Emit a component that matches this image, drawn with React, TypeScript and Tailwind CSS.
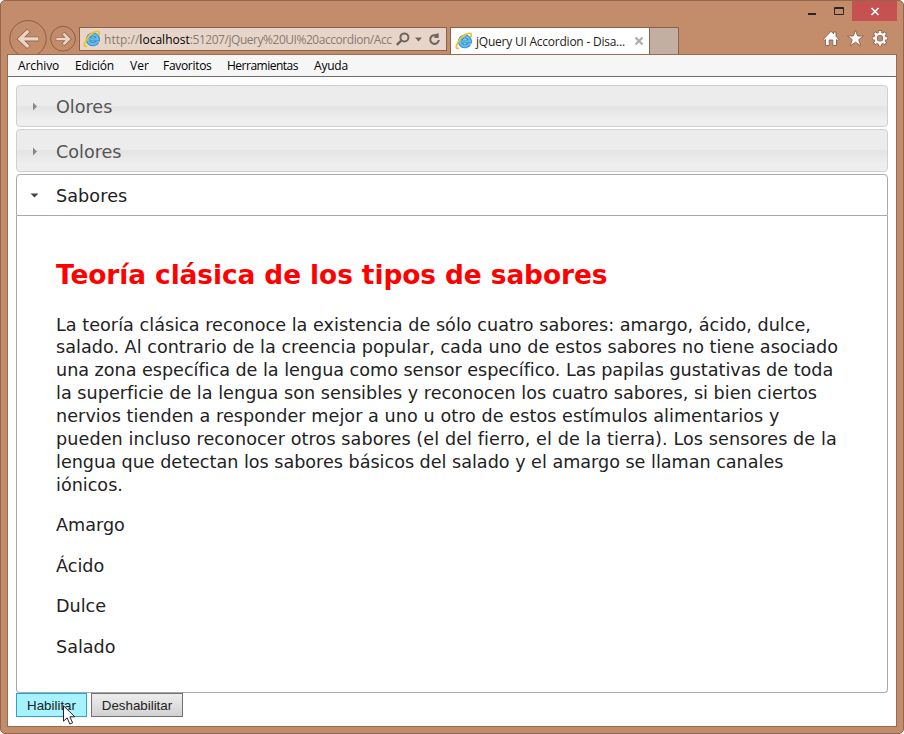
import type { ReactNode } from 'react';

function IeLogo() {
  return (
    <svg width="18" height="18" viewBox="0 0 18 18" className="shrink-0" fill="none">
      <path d="M14.3 11.7A5 4.9 0 1 1 14.9 9.4H6.4" stroke="#2a86c6" strokeWidth="4" />
      <path d="M14.3 11.7A5 4.9 0 1 1 14.9 9.3H6.4" stroke="#62bdec" strokeWidth="2.3" />
      <path d="M3.8 16C1.2 17.3.4 15.4 2.5 11.3C4.8 6.8 9.4 2.3 13.5 1.4C16.2.9 16.8 2.4 15.7 5" stroke="#f3c128" strokeWidth="1.8" />
    </svg>
  );
}

function Chevron({ open = false }: { open?: boolean }) {
  return (
    <svg width="9" height="9" viewBox="0 0 9 9" className="shrink-0">
      {open ? <path d="M.5 2.5h8l-4 4z" fill="#454545" /> : <path d="M3 .5v8l4-4z" fill="#888" />}
    </svg>
  );
}

function ClosedHeader({ children, tall = false }: { children: ReactNode; tall?: boolean }) {
  return (
    <div className={`${tall ? 'h-[43px] pt-px' : 'h-[42px]'} flex items-center gap-[17px] rounded-[4px] border border-[#d0d0d0] bg-[linear-gradient(#ececec_0%,#ececec_49%,#e4e4e4_50%,#efefef_85%,#eeeeee_100%)] pl-[13px] text-[#555]`}>
      <Chevron />
      <span className={`${tall ? 'pt-px' : 'pt-[2px]'} leading-[24px]`}>{children}</span>
    </div>
  );
}

const gearTeeth = [0, 45, 90, 135, 180, 225, 270, 315];

function Toolbar() {
  return (
    <div className="flex h-[54px] pl-[8px]">
      <div className="flex h-[54px] w-[71px] shrink-0 items-end overflow-hidden">
        <svg width="71" height="36" viewBox="8 18 71 36" fill="none">
          <circle cx="28" cy="38.7" r="18.2" stroke="#8e5f45" />
          <circle cx="63" cy="38.7" r="12.4" stroke="#8e5f45" />
          <path d="M28.7 30.5L20 38.9L28.7 47.3M20 38.9H38.8" stroke="#95664b" strokeWidth="5" />
          <path d="M28.3 30.9L20 38.9L28.3 46.9M19.5 38.9H38.3" stroke="#ead5c8" strokeWidth="3.4" />
          <path d="M63 33.2L68.8 39L63 44.8M68.8 39H55.8" stroke="#95664b" strokeWidth="4.2" />
          <path d="M63.4 33.6L68.8 39L63.4 44.4M69.3 39H56.3" stroke="#ead5c8" strokeWidth="2.6" />
        </svg>
      </div>
      <div className="mt-[27px] flex h-[24px] w-[368px] shrink-0 items-center border border-[#8b6149] bg-[#e8d5c9] pl-[3px]">
        <IeLogo />
        <span className="ml-[3px] w-[288px] whitespace-nowrap pt-[1px] font-['Open_Sans',sans-serif] text-[12px] leading-[20px] tracking-[-0.46px] text-[#877b73]">
          <span className="tracking-[0.02px]">http://<span className="text-black">localhost</span></span>:51207/jQuery%20UI%20accordion/Acc
        </span>
        <svg width="48" height="20" viewBox="0 0 48 20" className="ml-[3px]" fill="none" stroke="#70665f">
          <circle cx="9.4" cy="8.4" r="4" strokeWidth="2" />
          <path d="M6.4 11.4L1.8 15.8" strokeWidth="2.4" />
          <path d="M20 8.5h7l-3.5 4z" fill="#70665f" stroke="none" />
          <path d="M42 7A4.3 4.3 0 1 0 43.8 11" strokeWidth="2.1" />
          <path d="M40 4.9L43.7 4.2V9H39.3z" fill="#70665f" stroke="none" />
        </svg>
      </div>
      <div className="ml-[3px] mt-[27px] flex h-[27px] w-[200px] shrink-0 items-center border border-b-0 border-[#8b6149] bg-white pb-px pl-[4px]">
        <IeLogo />
        <span className="ml-[3px] w-[152px] whitespace-nowrap pt-[2px] font-['Open_Sans',sans-serif] text-[12px] leading-[20px] tracking-[-0.23px] text-[#222]">jQuery UI Accordion - Disa...</span>
        <svg width="12" height="12" viewBox="0 0 12 12" className="ml-[5px] shrink-0" fill="none">
          <path d="M2.5 2.5l7 7M9.5 2.5l-7 7" stroke="#aaa" strokeWidth="2" />
        </svg>
      </div>
      <div className="mt-[27px] h-[27px] w-[29px] shrink-0 border border-b-0 border-l-0 border-[#8b6149] bg-[#c2afa2]" />
      <div className="flex flex-1 flex-col items-end">
        <div className="flex h-[21px]">
          <svg width="52" height="21" viewBox="800 0 52 21" fill="none">
            <path d="M808 14h8" stroke="#2b2623" strokeWidth="2" />
            <path d="M834.5 7.5h9v7h-9zM834 8.5h10" stroke="#2b2623" />
          </svg>
          <div className="flex h-[20px] w-[45px] items-center justify-center self-end bg-[#c75050]">
            <svg width="10" height="10" viewBox="0 0 10 10"><path d="M1.5 2l7 7M8.5 2l-7 7" stroke="white" strokeWidth="1.7" /></svg>
          </div>
          <div className="w-[7px]" />
        </div>
        <svg width="81" height="33" viewBox="823 21 81 33" stroke="#896049" strokeWidth=".9">
          <path d="M823.5 39.2L831 31.2L833.5 33.8V32H836V36.2L838.6 39.2L837.4 40.3L836.5 39.5V45.5H832.8V40H829.2V45.5H825.5V39.5L824.5 40.3Z" fill="white" />
          <path d="M855.5 30.3L857.6 36H863.4L858.8 39.6L860.7 45.8L855.5 42.2L850.3 45.8L852.2 39.6L847.6 36H853.4Z" fill="white" />
          <g fill="none" stroke="#896049">
            <circle cx="880" cy="38.3" r="4.4" strokeWidth="3.7" />
            {gearTeeth.map((angle) => (
              <path key={angle} d="M880 33.5V30.3" strokeWidth="3.7" transform={`rotate(${angle} 880 38.3)`} />
            ))}
          </g>
          <g fill="none" stroke="white">
            <circle cx="880" cy="38.3" r="4.4" strokeWidth="2.4" />
            {gearTeeth.map((angle) => (
              <path key={angle} d="M880 34V31" strokeWidth="2.4" transform={`rotate(${angle} 880 38.3)`} />
            ))}
          </g>
        </svg>
      </div>
    </div>
  );
}

function MenuBar() {
  return (
    <nav className="flex h-[22px] shrink-0 items-center border-b border-[#6d6d6d] bg-[#f6f6f6] pl-[10px] pt-px font-['Open_Sans',sans-serif] text-[12px] leading-[20px] text-black">
      <span className="w-[57px] tracking-[-0.1px]">Archivo</span>
      <span className="w-[55px] tracking-[-0.2px]">Edición</span>
      <span className="w-[33px]">Ver</span>
      <span className="w-[64px] tracking-[-0.3px]">Favoritos</span>
      <span className="w-[87px] tracking-[-0.5px]">Herramientas</span>
      <span className="tracking-[-0.2px]">Ayuda</span>
    </nav>
  );
}

export default function App() {
  return (
    <div className="relative h-[734px] w-[904px] overflow-hidden bg-white">
      <div className="h-full rounded-[5px] border border-[#92674d] bg-[#c38c6b]">
        <div className="-ml-px -mt-px w-[904px]">
          <Toolbar />
          <main className="ml-[7px] flex h-[673px] w-[890px] flex-col border border-[#986a50] bg-white">
            <MenuBar />
            <section className="mx-[8px] mt-[8px] flex w-[872px] flex-col font-['DejaVu_Sans',sans-serif] text-[17.6px] text-[#222]">
              <div className="flex flex-col gap-[2px]">
                <ClosedHeader>Olores</ClosedHeader>
                <ClosedHeader tall>Colores</ClosedHeader>
                <div className="flex h-[42px] items-center gap-[17px] rounded-t-[4px] border border-[#aaa] pl-[13px] text-[#212121]">
                  <Chevron open />
                  <span className="pt-[2px] tracking-[0.08px]">Sabores</span>
                </div>
              </div>
              <div className="h-[477px] whitespace-nowrap rounded-b-[4px] border border-t-0 border-[#aaa] pl-[39px] pt-[42px]">
                <h2 className="text-[26.4px] font-bold leading-[34px] tracking-[-0.075px] text-[#ff0000]">Teoría clásica de los tipos de sabores</h2>
                <div className="mt-[21.5px] leading-[22.88px]">
                  <div className="tracking-[0.035px]">La teoría clásica reconoce la existencia de sólo cuatro sabores: amargo, ácido, dulce,</div>
                  <div className="tracking-[0.023px]">salado. Al contrario de la creencia popular, cada uno de estos sabores no tiene asociado</div>
                  <div className="tracking-[-0.02px]">una zona específica de la lengua como sensor específico. Las papilas gustativas de toda</div>
                  <div className="tracking-[0.025px]">la superficie de la lengua son sensibles y reconocen los cuatro sabores, si bien ciertos</div>
                  <div className="tracking-[0.06px]">nervios tienden a responder mejor a uno u otro de estos estímulos alimentarios y</div>
                  <div className="tracking-[0.09px]">pueden incluso reconocer otros sabores (el del fierro, el de la tierra). Los sensores de la</div>
                  <div className="tracking-[-0.01px]">lengua que detectan los sabores básicos del salado y el amargo se llaman canales</div>
                  <div>iónicos.</div>
                </div>
                <div className="mt-[17.8px] flex flex-col gap-[17.6px] leading-[22.88px]">
                  <p>Amargo</p><p>Ácido</p><p>Dulce</p><p>Salado</p>
                </div>
              </div>
            </section>
            <div className="ml-[8px] flex gap-[4px] font-['Liberation_Sans',Arial,sans-serif] text-[13.33px] text-[#222]">
              <button className="h-[24px] w-[71px] border border-[#2a9fd8] bg-[#a5f3ff] pt-[2px]">Habilitar</button>
              <button className="h-[24px] w-[92px] border border-[#707070] bg-linear-to-b from-[#ededed] to-[#d2d2d2] pt-[2px]">Deshabilitar</button>
            </div>
          </main>
        </div>
      </div>
      <svg width="14" height="21" viewBox="0 0 14 21" className="absolute left-[63px] top-[705px]">
        <path d="M.5.8v15.4l3.6-3.4 2.7 6.2 2.8-1.2-2.7-6h4.9z" fill="white" stroke="#222" />
      </svg>
    </div>
  );
}
